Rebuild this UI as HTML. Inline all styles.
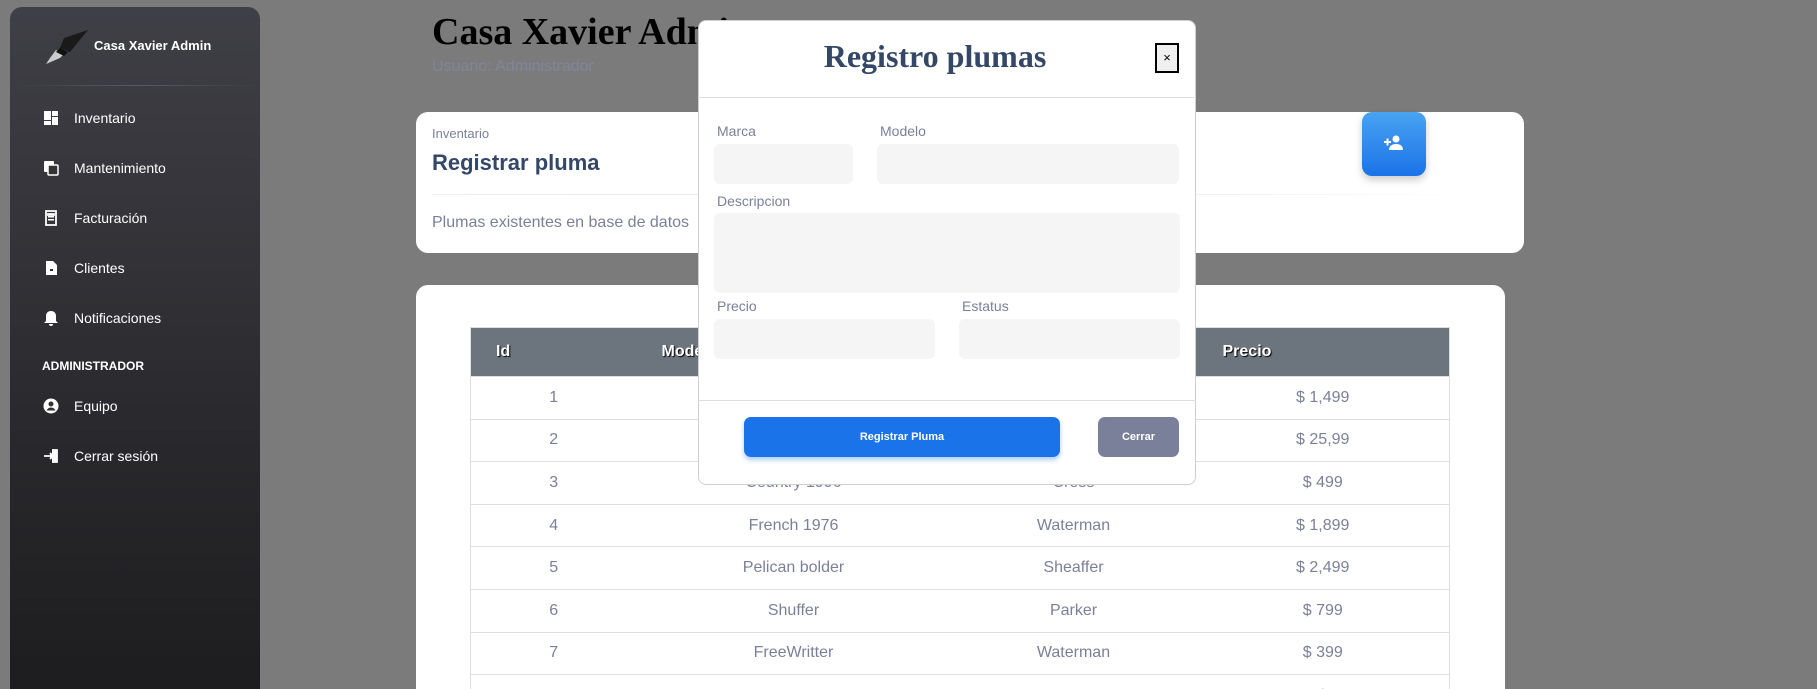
<!DOCTYPE html>
<html><head><meta charset="utf-8"><style>
*{box-sizing:border-box;margin:0;padding:0}
html,body{width:1817px;height:689px;overflow:hidden}
body{background:#7b7b7b;font-family:"Liberation Sans",sans-serif;position:relative}
.abs{position:absolute}
.side{left:10px;top:7px;width:250px;height:682px;border-radius:12px 12px 0 0;background:linear-gradient(180deg,#3f3f46 0%,#2a2a2e 60%,#1d1d1f 100%)}
.nav{position:absolute;left:43px;color:#fff;font-size:14px;display:flex;align-items:center}
.nav svg{width:16px;height:16px;margin-right:15px;fill:#fff}
.card{background:#fff;border-radius:12px}
.lbl{color:#7b809a;font-size:14px}
.inp{background:#f5f5f5;border-radius:6px}
td{color:#7b809a;font-size:16px;text-align:center;border-top:1px solid #dedede;height:42.6px}
th{color:#fff;font-size:16px;text-align:left;text-shadow:1px 1px 1px #000;height:49px}
</style></head><body>
<div class="abs side"></div>
<svg class="abs" style="left:42px;top:30px" width="46" height="36" viewBox="0 0 46 36"><polygon points="18,18 22,8 46,0 28,22" fill="#1a1a1a"/><polygon points="14,20 22,24 18,28 4,34 8,28" fill="#ccc"/><polygon points="18,18 26,22 22,26 14,22" fill="#111"/></svg>
<div class="abs" style="left:94px;top:38px;color:#fff;font-weight:bold;font-size:13px">Casa Xavier Admin</div>
<div class="abs" style="left:14px;top:85px;width:246px;height:1px;background:linear-gradient(90deg,transparent,#5a5a62,transparent)"></div>
<div class="nav" style="top:110px"><svg viewBox="0 0 16 16"><rect x="1" y="1" width="7" height="9"/><rect x="9" y="1" width="6" height="5"/><rect x="9" y="7" width="6" height="8"/><rect x="1" y="11" width="7" height="4"/></svg>Inventario</div>
<div class="nav" style="top:160px"><svg viewBox="0 0 16 16"><rect x="1" y="1" width="10" height="11" rx="1"/><rect x="5" y="5" width="10" height="10" rx="1" fill="#333" stroke="#fff" stroke-width="1.5"/></svg>Mantenimiento</div>
<div class="nav" style="top:210px"><svg viewBox="0 0 16 16"><path d="M3 1h10v14H3z M5 4h6v1H5z" fill="none" stroke="#fff" stroke-width="1.8"/><rect x="5" y="6" width="6" height="1.5"/><rect x="5" y="9" width="6" height="1.5"/></svg>Facturación</div>
<div class="nav" style="top:260px"><svg viewBox="0 0 16 16"><path d="M3 1h7l4 4v10H3z"/><rect x="7" y="9" width="3" height="2" fill="#333"/></svg>Clientes</div>
<div class="nav" style="top:310px"><svg viewBox="0 0 16 16"><path d="M8 1c3 0 5 2 5 5v5l2 2H1l2-2V6c0-3 2-5 5-5z M6 14h4a2 2 0 0 1-4 0z"/></svg>Notificaciones</div>
<div class="abs" style="left:42px;top:359px;color:#fff;font-weight:bold;font-size:12px">ADMINISTRADOR</div>
<div class="nav" style="top:398px"><svg viewBox="0 0 16 16"><circle cx="8" cy="8" r="7.5"/><circle cx="8" cy="6" r="2.5" fill="#333"/><path d="M3.5 12.5c1-2 2.5-3 4.5-3s3.5 1 4.5 3" fill="#333"/></svg>Equipo</div>
<div class="nav" style="top:448px"><svg viewBox="0 0 16 16" fill="none" stroke="#fff" stroke-width="1.8"><path d="M9 2h5v12H9 M1 8h9 M7 5l3 3-3 3"/></svg>Cerrar sesión</div>

<div class="abs" style="left:432px;top:10px;font-family:'Liberation Serif',serif;font-weight:bold;font-size:38px;color:#000">Casa Xavier Admin</div>
<div class="abs" style="left:432px;top:58px;font-size:16px;color:#82859a">Usuario: Administrador</div>

<div class="abs card" style="left:416px;top:112px;width:1108px;height:141px"></div>
<div class="abs lbl" style="left:432px;top:126px;font-size:13px">Inventario</div>
<div class="abs" style="left:432px;top:150px;font-size:22px;font-weight:bold;color:#344767">Registrar pluma</div>
<div class="abs" style="left:432px;top:194px;width:1046px;height:1px;background:linear-gradient(90deg,#eee,#e4e4e4,transparent)"></div>
<div class="abs" style="left:432px;top:214px;font-size:16px;color:#7b809a">Plumas existentes en base de datos</div>
<div class="abs" style="left:1362px;top:112px;width:64px;height:64px;border-radius:10px;background:linear-gradient(180deg,#49a3f1,#1a73e8);box-shadow:0 4px 8px rgba(0,0,0,.2)"></div>
<svg class="abs" style="left:1384px;top:135px" width="20" height="16" viewBox="0 0 20 16" fill="#fff"><circle cx="12" cy="4" r="3.5"/><path d="M5 15c0-4 3-6 7-6s7 2 7 6z"/><rect x="0" y="6" width="7" height="2"/><rect x="2.5" y="3.5" width="2" height="7"/></svg>

<div class="abs card" style="left:416px;top:285px;width:1089px;height:420px;border-radius:12px 12px 0 0"></div>
<table class="abs" style="left:470px;top:327px;width:979px;border-collapse:collapse;border:1px solid #dedede;table-layout:fixed">
<colgroup><col style="width:166px"><col style="width:314px"><col style="width:246px"><col style="width:253px"></colgroup>
<tr style="background:#6c757d"><th style="padding-left:25px">Id</th><th style="padding-left:25px">Modelo</th><th></th><th style="padding-left:26px">Precio</th></tr>
<tr><td>1</td><td></td><td></td><td>$ 1,499</td></tr>
<tr><td>2</td><td></td><td></td><td>$ 25,99</td></tr>
<tr><td>3</td><td>Country 1996</td><td>Cross</td><td>$ 499</td></tr>
<tr><td>4</td><td>French 1976</td><td>Waterman</td><td>$ 1,899</td></tr>
<tr><td>5</td><td>Pelican bolder</td><td>Sheaffer</td><td>$ 2,499</td></tr>
<tr><td>6</td><td>Shuffer</td><td>Parker</td><td>$ 799</td></tr>
<tr><td>7</td><td>FreeWritter</td><td>Waterman</td><td>$ 399</td></tr>
<tr><td></td><td></td><td></td><td>$</td></tr>
</table>

<div class="abs" style="left:698px;top:20px;width:498px;height:465px;background:#fff;border-radius:8px;border:1px solid #cfcfcf"></div>
<div class="abs" style="left:698px;top:38px;width:474px;text-align:center;font-family:'Liberation Serif',serif;font-weight:bold;font-size:32px;color:#344767">Registro plumas</div>
<div class="abs" style="left:1155px;top:43px;width:24px;height:30px;border:2px solid #000;background:#f0f0f0;font-size:13px;text-align:center;line-height:26px">×</div>
<div class="abs" style="left:698px;top:97px;width:498px;height:1px;background:#dedede"></div>
<div class="abs lbl" style="left:717px;top:123px">Marca</div>
<div class="abs lbl" style="left:880px;top:123px">Modelo</div>
<div class="abs inp" style="left:714px;top:144px;width:139px;height:40px"></div>
<div class="abs inp" style="left:877px;top:144px;width:302px;height:40px"></div>
<div class="abs lbl" style="left:717px;top:193px">Descripcion</div>
<div class="abs inp" style="left:714px;top:213px;width:466px;height:80px"></div>
<div class="abs lbl" style="left:717px;top:298px">Precio</div>
<div class="abs lbl" style="left:962px;top:298px">Estatus</div>
<div class="abs inp" style="left:714px;top:319px;width:221px;height:40px"></div>
<div class="abs inp" style="left:959px;top:319px;width:221px;height:40px"></div>
<div class="abs" style="left:698px;top:400px;width:498px;height:1px;background:#dedede"></div>
<div class="abs" style="left:744px;top:417px;width:316px;height:40px;background:#1a73e8;border-radius:7px;box-shadow:0 3px 5px rgba(26,115,232,.35);color:#fff;font-weight:bold;font-size:11px;text-align:center;line-height:40px">Registrar Pluma</div>
<div class="abs" style="left:1098px;top:417px;width:81px;height:40px;background:#7b809a;border-radius:7px;color:#fff;font-weight:bold;font-size:11px;text-align:center;line-height:40px">Cerrar</div>
</body></html>
